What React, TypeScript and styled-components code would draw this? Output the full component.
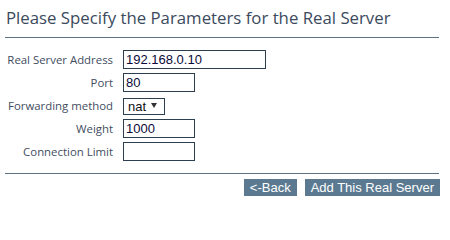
import styled, { createGlobalStyle } from 'styled-components';

const GlobalStyle = createGlobalStyle`
  body {
    margin: 0;
    background: #ffffff;
  }
`;

const Page = styled.div`
  width: 434px;
  padding: 7px 0 0 5px;
  box-sizing: content-box;
`;

const Heading = styled.h2`
  margin: 0;
  padding: 0 0 8px 1px;
  font-family: "Open Sans", sans-serif;
  font-weight: normal;
  font-size: 16.8px;
  line-height: 22px;
  color: #3b4a5d;
  border-bottom: 1px solid #5e7485;
`;

const Form = styled.div`
  display: grid;
  grid-template-columns: 108px auto;
  grid-auto-rows: 19px;
  column-gap: 10px;
  row-gap: 4px;
  padding: 12px 0 12px;
  border-bottom: 1px solid #5e7485;
`;

const Label = styled.label`
  display: flex;
  align-items: center;
  justify-content: flex-end;
  font-family: "Open Sans", sans-serif;
  font-size: 11.4px;
  color: #3f4d5f;
  white-space: nowrap;
`;

const Field = styled.div`
  display: flex;
  align-items: center;
`;

const TextInput = styled.input<{ $w: number }>`
  width: ${p => p.$w}px;
  height: 19px;
  box-sizing: border-box;
  margin: 0;
  padding: 0 2px;
  border: 1px solid #2d3e4f;
  font-family: "Liberation Sans", Arial, sans-serif;
  font-size: 13px;
  color: #0b0b3a;
  background: #fff;
  outline: none;
`;

const SelectWrap = styled.div`
  position: relative;
  width: 42px;
  height: 17px;
  &::after {
    content: "";
    position: absolute;
    right: 8px;
    top: 6px;
    width: 0;
    height: 0;
    border-left: 3px solid transparent;
    border-right: 3px solid transparent;
    border-top: 5px solid #333;
    pointer-events: none;
  }
`;

const Select = styled.select`
  appearance: none;
  width: 100%;
  height: 100%;
  box-sizing: border-box;
  margin: 0;
  padding: 0 0 0 4px;
  border: 1px solid #2d3e4f;
  border-radius: 0;
  background: #fff;
  font-family: "Liberation Sans", Arial, sans-serif;
  font-size: 13px;
  color: #111;
  outline: none;
`;

const Actions = styled.div`
  display: flex;
  justify-content: flex-end;
  gap: 8px;
  padding-top: 5px;
  margin-right: -1px;
`;

const Button = styled.button`
  height: 17px;
  margin: 0;
  padding: 0 6px;
  border: none;
  border-radius: 0;
  background: #5b7a91;
  color: #ffffff;
  font-family: "Liberation Sans", Arial, sans-serif;
  font-size: 13px;
  line-height: 17px;
  cursor: pointer;
`;

export default function App() {
  return (
    <Page>
      <GlobalStyle />
      <Heading>Please Specify the Parameters for the Real Server</Heading>
      <Form>
        <Label>Real Server Address</Label>
        <Field>
          <TextInput $w={143} defaultValue="192.168.0.10" />
        </Field>
        <Label>Port</Label>
        <Field>
          <TextInput $w={72} defaultValue="80" />
        </Field>
        <Label>Forwarding method</Label>
        <Field>
          <SelectWrap>
            <Select defaultValue="nat">
              <option value="nat">nat</option>
              <option value="dr">dr</option>
              <option value="tun">tun</option>
            </Select>
          </SelectWrap>
        </Field>
        <Label>Weight</Label>
        <Field>
          <TextInput $w={72} defaultValue="1000" />
        </Field>
        <Label>Connection Limit</Label>
        <Field>
          <TextInput $w={72} defaultValue="" />
        </Field>
      </Form>
      <Actions>
        <Button>&lt;-Back</Button>
        <Button>Add This Real Server</Button>
      </Actions>
    </Page>
  );
}
